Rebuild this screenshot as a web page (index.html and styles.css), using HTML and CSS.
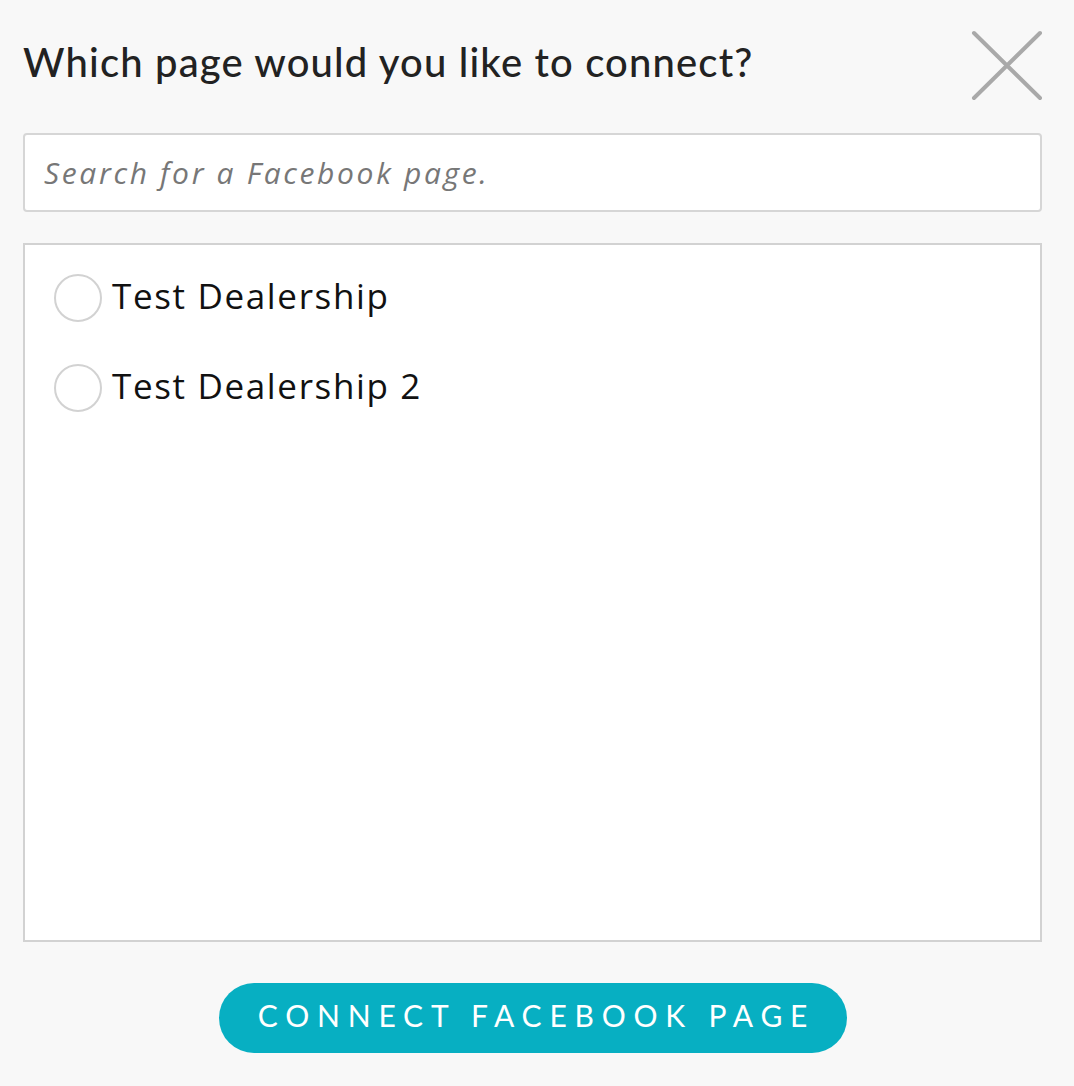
FILE: index.html
```html
<!DOCTYPE html>
<html>
<head>
<meta charset="utf-8">
<link rel="stylesheet" href="styles.css">
</head>
<body>
<div class="modal">
  <div class="header">
    <h1 class="title">Which page would you like to connect?</h1>
    <button class="close" aria-label="Close">
      <svg width="72" height="72" viewBox="0 0 72 72"><path d="M3 4 L69 69 M69 4 L3 69" stroke="#a9a9a9" stroke-width="4" stroke-linecap="round" fill="none"/></svg>
    </button>
  </div>
  <div class="search"><span class="placeholder">Search for a Facebook page.</span></div>
  <div class="list">
    <label class="item"><span class="radio"></span><span class="name">Test Dealership</span></label>
    <label class="item"><span class="radio"></span><span class="name">Test Dealership 2</span></label>
  </div>
  <div class="footer">
    <button class="connect">CONNECT FACEBOOK PAGE</button>
  </div>
</div>
</body>
</html>
```
FILE: styles.css
```css
html, body { margin: 0; padding: 0; }
body { background: #f8f8f8; font-family: "Lato", sans-serif; width: 1074px; height: 1086px; overflow: hidden; }
.modal { padding: 0 32px 0 23px; }
.header { display: flex; justify-content: space-between; align-items: flex-start; height: 133px; }
.title { margin: 38px 0 0 0; font-family: "Lato", sans-serif; font-weight: 500; font-size: 40px; color: #222; letter-spacing: 1.15px; line-height: 48px; }
.close { background: none; border: none; padding: 0; margin: 29px -1px 0 0; width: 72px; height: 72px; }
.search { box-sizing: border-box; height: 79px; border: 2px solid #d6d6d6; border-radius: 4px; background: #fff; display: flex; align-items: center; padding-left: 19px; }
.placeholder { font-family: "Open Sans", sans-serif; font-style: italic; font-size: 30px; color: #777; letter-spacing: 2.65px; }
.list { box-sizing: border-box; margin-top: 31px; height: 699px; border: 2px solid #d2d2d2; background: #fff; padding: 29px 0 0 29px; }
.item { display: flex; align-items: center; height: 48px; margin-bottom: 42px; }
.radio { box-sizing: border-box; width: 48px; height: 48px; border: 2px solid #d2d2d2; border-radius: 50%; margin-right: 10px; flex: none; }
.name { font-family: "Open Sans", sans-serif; font-size: 35px; color: #111; letter-spacing: 1.65px; padding-bottom: 5px; }
.footer { display: flex; justify-content: center; padding-top: 41px; }
.connect { height: 70px; width: 628px; border: none; border-radius: 35px; background: #07afc2; color: #fff; font-family: "Lato", sans-serif; font-size: 30px; letter-spacing: 7.8px; padding: 0 0 6px 8px; }
```
